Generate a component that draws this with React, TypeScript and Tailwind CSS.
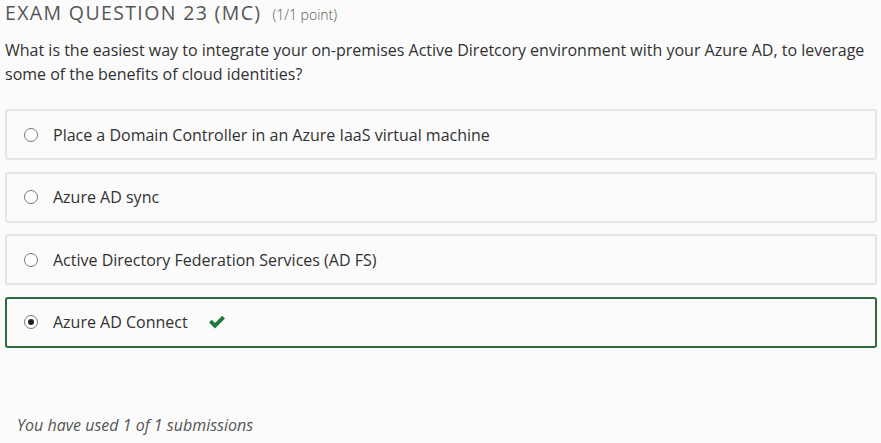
import React from "react";

const options = [
  "Place a Domain Controller in an Azure IaaS virtual machine",
  "Azure AD sync",
  "Active Directory Federation Services (AD FS)",
  "Azure AD Connect",
];

export default function App() {
  return (
    <div
      className="w-[881px] h-[443px] overflow-hidden bg-[#fbfbfb] text-[#313131]"
      style={{ fontFamily: '"Open Sans", "Noto Sans", sans-serif' }}
    >
      <div className="pl-[5px] pt-[0px] h-[26px] flex items-baseline">
        <span className="text-[19.5px] tracking-[0.07em] text-[#555] leading-[26px]">
          EXAM QUESTION 23 (MC)
        </span>
        <span className="ml-[11px] text-[14px] font-light text-[#555]">(1/1 point)</span>
      </div>
      <p className="mt-[12px] pl-[5px] pr-[10px] text-[16px] leading-[24px] text-[#313131]">
        What is the easiest way to integrate your on-premises Active Diretcory environment with
        your Azure AD, to leverage some of the benefits of cloud identities?
      </p>
      <div className="mt-[23px] ml-[5px] w-[872px] flex flex-col gap-[11.6px]">
        {options.map((o, i) => {
          const selected = i === 3;
          return (
            <div
              key={o}
              className={
                selected
                  ? "h-[51px] rounded-[3px] border-2 border-[#2e6a3e] flex items-center"
                  : "h-[51px] rounded-[3px] border-2 border-[#e5e5e5] flex items-center"
              }
            >
              <span className="ml-[17px] w-[14px] h-[14px] rounded-full border border-[#777] bg-white flex items-center justify-center">
                {selected && <span className="w-[6px] h-[6px] rounded-full bg-[#222]" />}
              </span>
              <span className="ml-[15px] text-[16px] text-[#313131]">{o}</span>
              {selected && (
                <svg className="ml-[20px]" width="18" height="14" viewBox="0 0 18 14">
                  <path d="M1 7.5 L3.8 4.8 L7 8 L14.2 0.8 L17 3.6 L7 13.6 Z" fill="#1e7a3c" />
                </svg>
              )}
            </div>
          );
        })}
      </div>
      <p className="mt-[65px] pl-[17px] italic text-[16px] text-[#555]">
        You have used 1 of 1 submissions
      </p>
    </div>
  );
}
